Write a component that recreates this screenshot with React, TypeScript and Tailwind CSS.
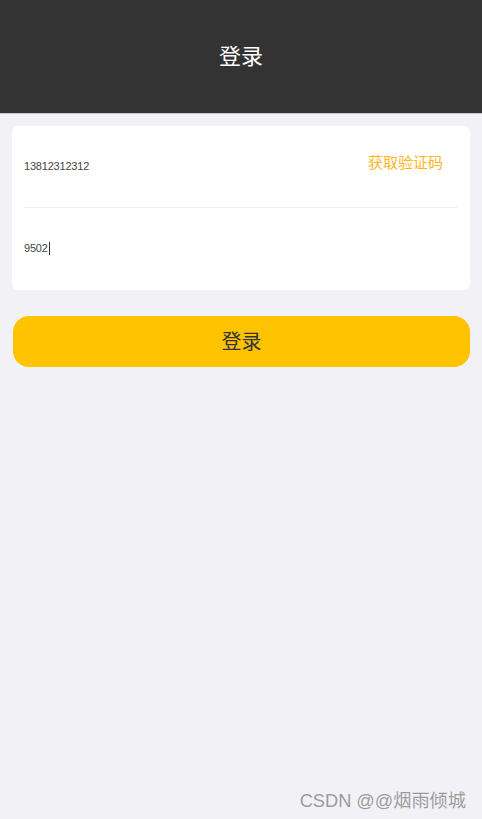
import React from "react";

export default function App() {
  return (
    <div
      className="relative w-[482px] h-[819px] bg-[#f2f1f6] overflow-hidden"
      style={{ fontFamily: '"Liberation Sans", Arial, "Noto Sans CJK SC", sans-serif' }}
    >
      <header className="h-[114px] bg-[#333333] border-b border-[#c8c8c8] flex items-center justify-center">
        <h1 className="text-[22px] text-white leading-none">登录</h1>
      </header>

      <div className="mx-3 mt-3 bg-white rounded-[6px]">
        <div className="h-[81px] flex items-center justify-between pl-3 pr-[27px]">
          <span className="text-[11px] tracking-[-0.2px] text-[#444]">13812312312</span>
          <span className="text-[15px] text-[#ffb61e] -mt-[7px]">获取验证码</span>
        </div>
        <div className="mx-3 h-px bg-[#f0f0f0]" />
        <div className="h-[82px] flex items-center pl-3">
          <span className="text-[11px] tracking-[-0.2px] text-[#444] flex items-center -mt-[2px]">
            9502<span className="inline-block w-px h-[13px] bg-[#333] ml-[1px]" />
          </span>
        </div>
      </div>

      <button className="ml-[13px] mr-3 mt-[26px] w-[457px] h-[51px] rounded-[16px] bg-[#ffc300] flex items-center justify-center">
        <span className="text-[20px] text-[#333]">登录</span>
      </button>

      <div className="absolute right-[16px] bottom-[4px] text-[18.2px] text-[#9a9a9a] [text-shadow:0_0_1px_#fff]">
        CSDN @@烟雨倾城
      </div>
    </div>
  );
}
